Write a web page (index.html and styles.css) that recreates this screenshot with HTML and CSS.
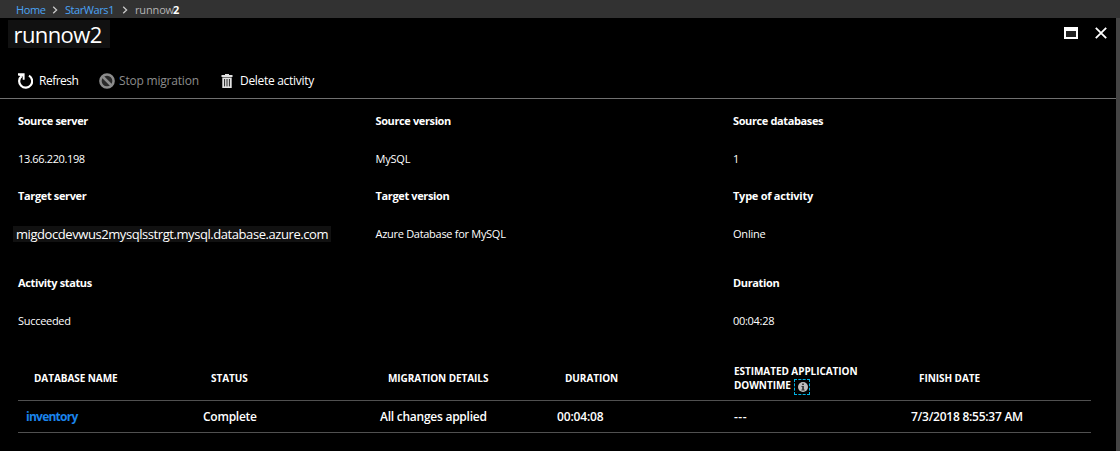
FILE: index.html
```html
<!DOCTYPE html>
<html lang="en">
<head>
<meta charset="utf-8">
<title>runnow2</title>
<link rel="stylesheet" href="styles.css">
</head>
<body>
<nav class="breadcrumb">
  <a class="crumb crumb-home">Home</a>
  <svg class="chevron" viewBox="0 0 6 8"><path d="M1.2.8 4.6 4 1.2 7.2"/></svg>
  <a class="crumb crumb-project">StarWars1</a>
  <svg class="chevron" viewBox="0 0 6 8"><path d="M1.2.8 4.6 4 1.2 7.2"/></svg>
  <span class="crumb current">runnow<b>2</b></span>
</nav>
<main class="blade">
  <header class="blade-header">
    <h1 class="title">runnow2</h1>
    <div class="window-actions">
      <svg class="maximize" viewBox="0 0 14 12"><path fill="#fff" d="M0 0h14v12H0z"/><path fill="#222" d="M2 4h10v6H2z"/></svg>
      <svg class="close" viewBox="0 0 12 12"><path d="m.8.8 10.4 10.4M11.2.8.8 11.2"/></svg>
    </div>
  </header>
  <div class="toolbar">
    <div class="command refresh">
      <svg class="icon" viewBox="0 0 16 16"><path fill="none" stroke="#fff" stroke-width="2.2" d="M12 2.6A6.5 6.5 0 1 1 4.6 3.1"/><path fill="#fff" d="M1 .3h6.6v6.5H5.7V3.6L1 2.4z"/></svg>
      <span>Refresh</span>
    </div>
    <div class="command stop disabled">
      <svg class="icon" viewBox="0 0 16 16"><circle cx="8" cy="8" r="6.6" fill="#2a2a2a" stroke="#8c8c8c" stroke-width="2.5"/><path stroke="#8c8c8c" stroke-width="2.5" d="m3.5 3.5 9 9"/></svg>
      <span>Stop migration</span>
    </div>
    <div class="command delete">
      <svg class="trash" viewBox="0 0 12 14"><path fill="#e2e2e2" d="M4 0h4v1h3.5v2H.5V1H4zM1.3 3.6h9.4V14H1.3z"/><path stroke="#222" stroke-width="1" d="M3.6 5v7.4M6 5v7.4M8.4 5v7.4"/></svg>
      <span>Delete activity</span>
    </div>
  </div>
  <section class="properties">
    <dl class="property"><dt>Source server</dt><dd class="address">13.66.220.198</dd></dl>
    <dl class="property"><dt>Source version</dt><dd>MySQL</dd></dl>
    <dl class="property"><dt>Source databases</dt><dd>1</dd></dl>
    <dl class="property"><dt class="wide">Target server</dt><dd class="host">migdocdevwus2mysqlsstrgt.mysql.database.azure.com</dd></dl>
    <dl class="property"><dt class="wide">Target version</dt><dd class="long">Azure Database for MySQL</dd></dl>
    <dl class="property"><dt class="loose">Type of activity</dt><dd>Online</dd></dl>
    <dl class="property status"><dt class="wide">Activity status</dt><dd class="long">Succeeded</dd></dl>
    <dl class="property duration"><dt class="wide">Duration</dt><dd class="long">00:04:28</dd></dl>
  </section>
  <section class="table">
    <div class="row head">
      <div>DATABASE NAME</div><div>STATUS</div><div>MIGRATION DETAILS</div><div>DURATION</div>
      <div class="downtime">ESTIMATED APPLICATION<br>DOWNTIME<span class="info"><svg viewBox="0 0 10 10"><circle cx="5" cy="5" r="5" fill="#bdbdbd"/><path fill="#333" d="M4.1 1.6h1.8v1.5H4.1zM3.5 4h2.4v3.5h.7v.9H3.4v-.9h.8V4.9h-.7z"/></svg></span></div>
      <div>FINISH DATE</div>
    </div>
    <div class="row data">
      <div><a class="link">inventory</a></div><div>Complete</div><div>All changes applied</div><div class="time">00:04:08</div><div class="empty">---</div><div>7/3/2018 8:55:37 AM</div>
    </div>
  </section>
</main>
</body>
</html>
```
FILE: styles.css
```css
* { box-sizing: border-box; }
body {
  margin: 0;
  height: 451px;
  overflow: hidden;
  background: #444;
  color: #fff;
  font: 11px/16px "Open Sans", "Noto Sans", sans-serif;
  white-space: nowrap;
}
h1, dl, dt, dd { margin: 0; }
svg { display: block; flex: none; }

.breadcrumb {
  display: flex;
  align-items: flex-start;
  height: 18px;
  padding: 2px 0 0 16px;
  background: #323232;
}
.crumb { color: #4ba3f5; }
.crumb-home { width: 36px; letter-spacing: -.4px; }
.crumb-project { width: 57px; letter-spacing: -.43px; }
.current { margin-left: 1px; color: #b4b4b4; letter-spacing: -.15px; }
.current b { margin-left: -1px; color: #fff; font-weight: 700; }
.chevron { width: 6px; height: 8px; margin: 4px 7px 0 0; fill: none; stroke: #c8c8c8; stroke-width: 1.3; }
.crumb-project + .chevron { margin-right: 6px; }

.blade { width: 1116px; height: 433px; background: #000; }
.blade-header { display: flex; justify-content: space-between; height: 50px; padding: 2px 9px 0 8px; }
.title {
  width: 102px;
  height: 28px;
  padding-left: 5.5px;
  background: #111;
  font-size: 22px;
  font-weight: 400;
  line-height: 28px;
  letter-spacing: -.6px;
}
.window-actions { display: flex; gap: 17px; padding-top: 7px; }
.maximize { width: 14px; height: 12px; }
.close { width: 12px; height: 12px; stroke: #fff; stroke-width: 1.8; }

.toolbar { display: flex; height: 31px; padding: 4px 0 0 17px; border-bottom: 1px solid #707070; font-size: 12px; line-height: 17px; letter-spacing: -.3px; }
.command { display: flex; gap: 5px; }
.icon { width: 16px; height: 16px; margin-top: 1px; }
.refresh { width: 82px; gap: 6px; letter-spacing: -.5px; }
.stop { width: 122px; gap: 4px; letter-spacing: -.2px; }
.disabled { color: #8c8c8c; }
.trash { width: 12px; height: 14px; margin-top: 2px; }
.delete { gap: 7px; }

.properties {
  display: grid;
  grid-template-columns: 357.5px 357.5px 1fr;
  grid-template-rows: 75px 87px 54px;
  height: 230px;
  padding: 14px 0 0 18px;
}
.property { display: flex; flex-direction: column; gap: 22px; align-items: flex-start; letter-spacing: -.2px; }
.property dt { font-weight: 700; letter-spacing: -.38px; }
.property dt.wide { letter-spacing: -.36px; }
.property dt.loose { letter-spacing: -.25px; }
.property .address { letter-spacing: -.37px; }
.property .long { letter-spacing: -.29px; }
.property .host {
  margin-left: -5px;
  padding-left: 3px;
  width: 318px;
  background: #111;
  font-size: 13px;
  letter-spacing: -.43px;
}
.duration { grid-column: 3; }

.table { width: 1073px; margin: 22px 0 0 18px; font-weight: 600; }
.row { display: grid; grid-template-columns: 177px 177px 177px 177px 177px 1fr; align-items: center; border-bottom: 1px solid #505050; }
.head { height: 50px; padding: 5px 0 0 16px; font-size: 10px; font-weight: 700; line-height: 14px; letter-spacing: -.06px; }
.downtime { margin-left: -8px; }
.info { display: inline-flex; width: 16px; height: 16px; margin: -4px 0 -4px 3px; padding-left: 2px; align-items: center; justify-content: center; vertical-align: -3px; border: 1px dashed #00b4e6; }
.info svg { width: 10px; height: 10px; }
.data { height: 32px; padding: 1px 0 0 8px; font-size: 12px; letter-spacing: -.25px; }
.time { letter-spacing: -.15px; }
.empty { letter-spacing: .5px; }
.link { color: #1a84ec; font-weight: 700; letter-spacing: -.75px; }
```
